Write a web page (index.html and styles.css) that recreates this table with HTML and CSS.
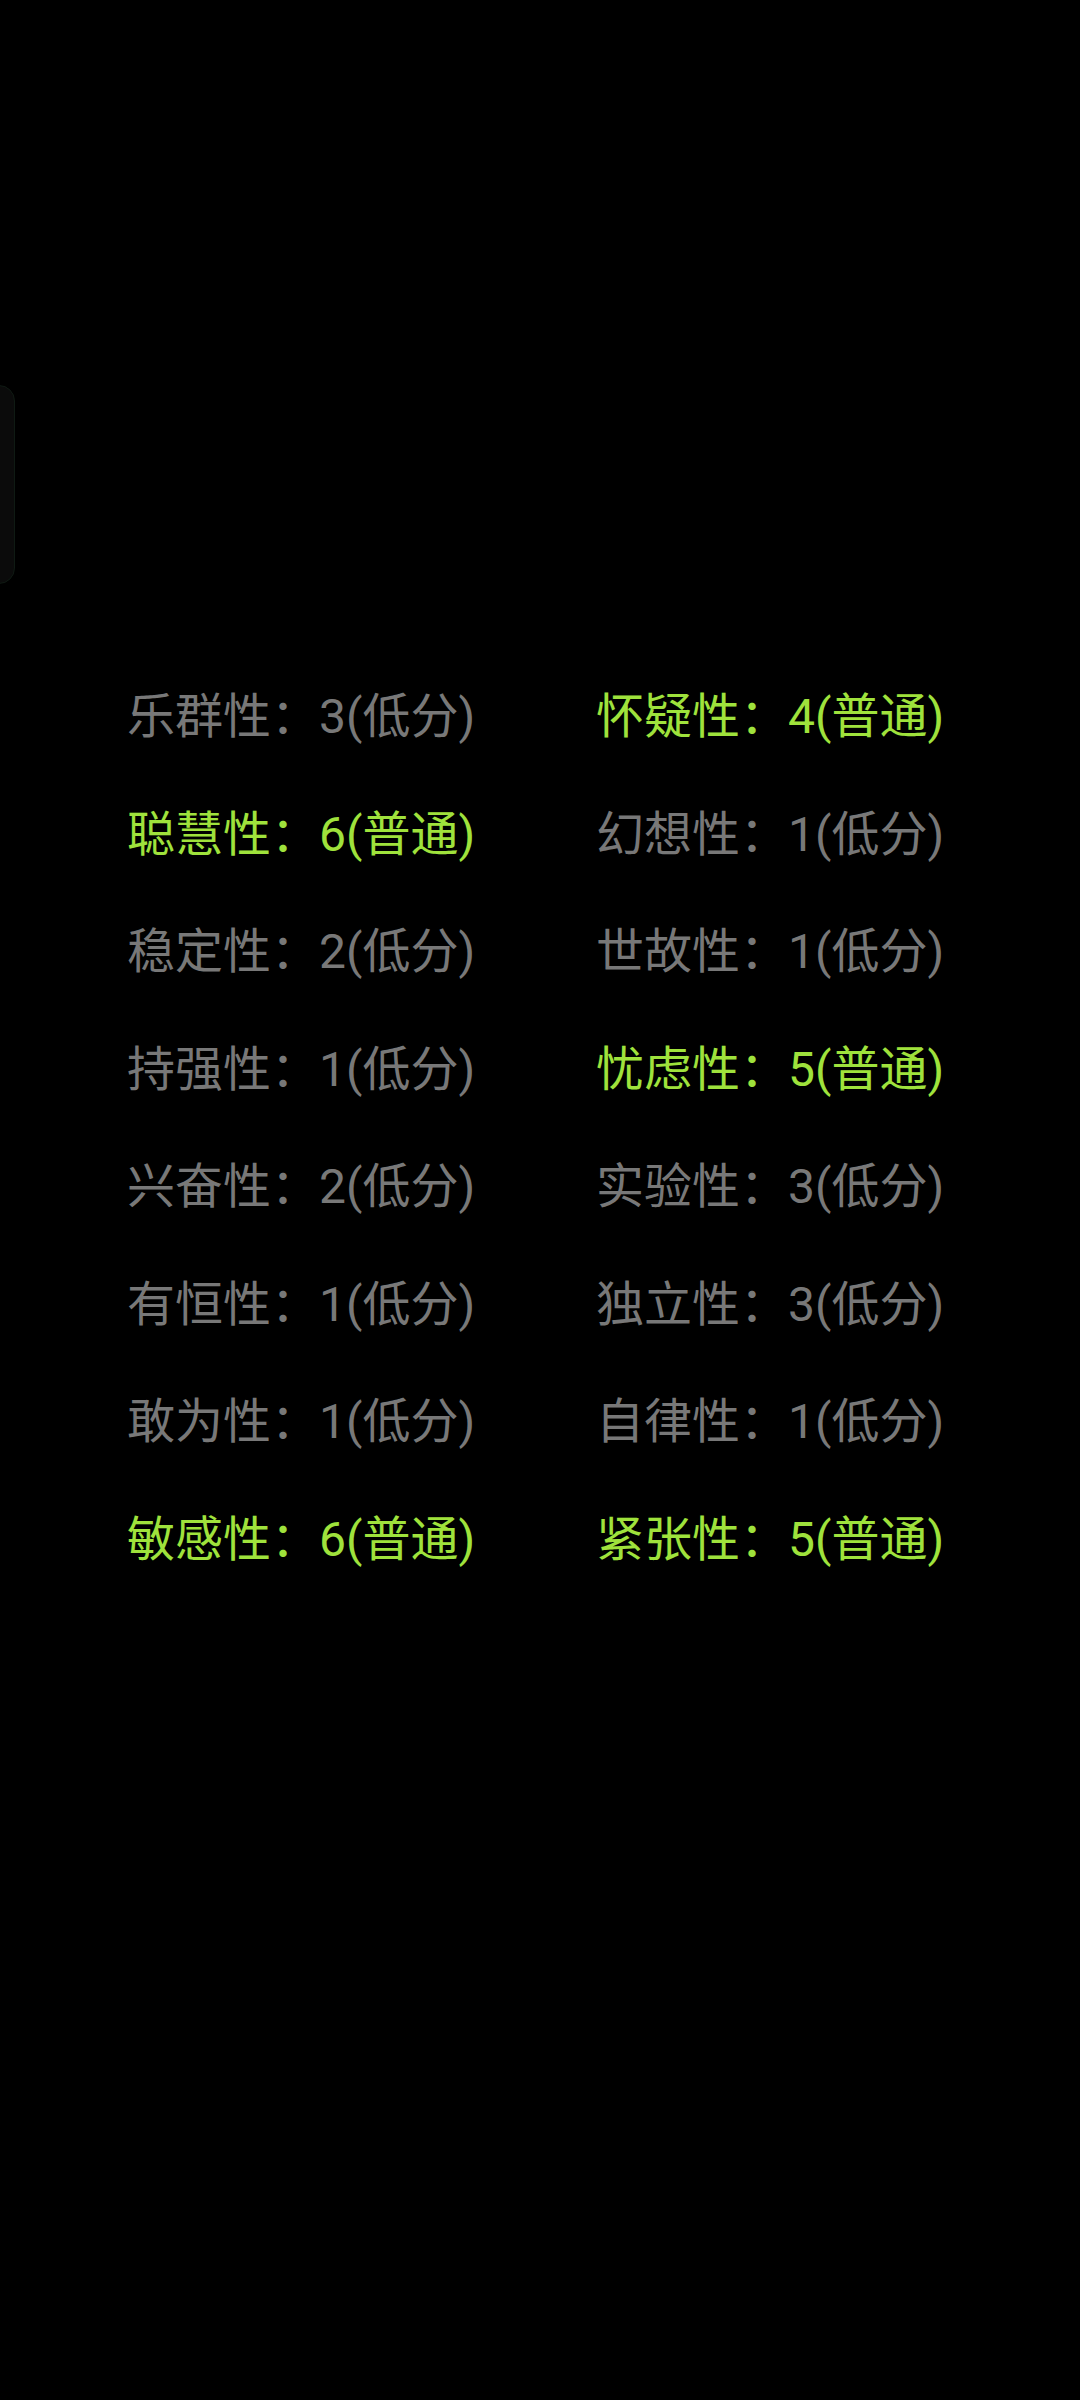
FILE: index.html
```html
<!DOCTYPE html>
<html lang="zh-CN">
<head>
<meta charset="utf-8">
<link rel="stylesheet" href="styles.css">
</head>
<body>
<div class="edge-card"></div>
<main class="traits">
  <div class="trait low">乐群性：3(低分)</div>
  <div class="trait mid">怀疑性：4(普通)</div>
  <div class="trait mid">聪慧性：6(普通)</div>
  <div class="trait low">幻想性：1(低分)</div>
  <div class="trait low">稳定性：2(低分)</div>
  <div class="trait low">世故性：1(低分)</div>
  <div class="trait low">持强性：1(低分)</div>
  <div class="trait mid">忧虑性：5(普通)</div>
  <div class="trait low">兴奋性：2(低分)</div>
  <div class="trait low">实验性：3(低分)</div>
  <div class="trait low">有恒性：1(低分)</div>
  <div class="trait low">独立性：3(低分)</div>
  <div class="trait low">敢为性：1(低分)</div>
  <div class="trait low">自律性：1(低分)</div>
  <div class="trait mid">敏感性：6(普通)</div>
  <div class="trait mid">紧张性：5(普通)</div>
</main>
</body>
</html>
```
FILE: styles.css
```css
html, body {
  margin: 0;
  padding: 0;
  background: #000;
}
body {
  width: 1080px;
  height: 2400px;
  position: relative;
  overflow: hidden;
  font-family: Roboto, "Noto Sans CJK SC", sans-serif;
}
.edge-card {
  position: absolute;
  left: -22px;
  top: 385px;
  width: 35px;
  height: 197px;
  border-radius: 16px;
  background: #0b0b0b;
  border: 1px solid #0f1a13;
}
.traits {
  display: grid;
  grid-template-columns: 469px auto;
  grid-auto-rows: 117.5px;
  padding: 658px 0 0 127px;
}
.trait {
  font-size: 48px;
  line-height: 117.5px;
  white-space: nowrap;
}
.low { color: #787878; }
.mid { color: #9fe23c; }
```
